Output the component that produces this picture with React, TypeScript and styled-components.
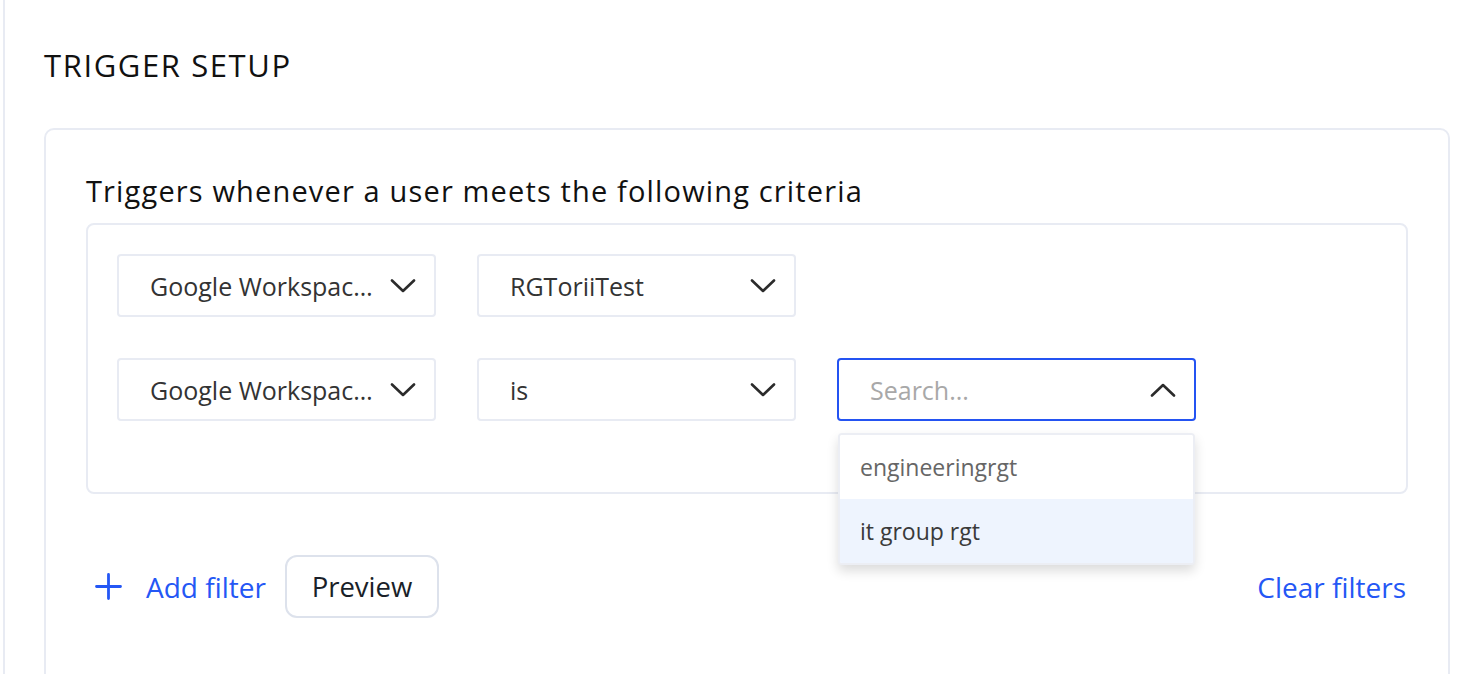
import React from "react";
import styled, { createGlobalStyle } from "styled-components";

const Global = createGlobalStyle`
  html, body { margin: 0; padding: 0; background: #ffffff; }
  body { font-family: "Open Sans", "Noto Sans", sans-serif; color: #1c1c1c; overflow: hidden; }
  * { box-sizing: border-box; }
`;

const Page = styled.div`
  margin-left: 3px;
  border-left: 2px solid #e8ebf3;
  padding: 44px 0 0 39px;
  height: 674px;
`;

const Heading = styled.h1`
  margin: 0;
  font-size: 31px;
  font-weight: 400;
  line-height: 42px;
  letter-spacing: 1.6px;
  color: #111;
`;

const Card = styled.section`
  margin-top: 42px;
  width: 1406px;
  height: 560px;
  border: 2px solid #e8ebf3;
  border-radius: 10px;
  padding: 40px 40px 0 40px;
`;

const Subtitle = styled.h2`
  margin: 0;
  font-size: 29px;
  font-weight: 400;
  line-height: 42px;
  letter-spacing: 1.15px;
  color: #111;
`;

const FilterBox = styled.div`
  margin-top: 11px;
  border: 2px solid #e8ebf3;
  border-radius: 8px;
  padding: 29px 29px 71px 29px;
  display: flex;
  flex-direction: column;
  gap: 41px;
`;

const Row = styled.div`
  display: flex;
  gap: 41px;
  align-items: flex-start;
`;

const Select = styled.div<{ $width?: number; $active?: boolean }>`
  position: relative;
  width: ${(p) => p.$width ?? 319}px;
  height: 63px;
  border: 2px solid ${(p) => (p.$active ? "#2453f2" : "#e8ebf3")};
  border-radius: 4px;
  display: flex;
  align-items: center;
  padding: 0 18px 0 31px;
  gap: 14px;
`;

const SelectText = styled.span<{ $placeholder?: boolean }>`
  flex: 1;
  min-width: 0;
  font-size: 25px;
  line-height: 34px;
  color: ${(p) => (p.$placeholder ? "#a8a8a8" : "#333")};
  white-space: nowrap;
  overflow: hidden;
  text-overflow: ellipsis;
`;

const Menu = styled.div`
  position: absolute;
  left: -1px;
  right: -1px;
  top: 73px;
  background: #fff;
  border: 2px solid #eceef4;
  border-radius: 4px;
  box-shadow: 0 6px 12px rgba(0, 0, 0, 0.14);
  overflow: hidden;
  z-index: 2;
`;

const MenuItem = styled.div<{ $hover?: boolean }>`
  height: 64px;
  display: flex;
  align-items: center;
  padding-left: 20px;
  font-size: 23px;
  color: ${(p) => (p.$hover ? "#3a3a3a" : "#666")};
  background: ${(p) => (p.$hover ? "#eef4fe" : "#fff")};
`;

const Actions = styled.div`
  margin-top: 61px;
  display: flex;
  align-items: center;
  padding-left: 9px;
`;

const LinkButton = styled.button`
  border: none;
  background: none;
  padding: 0;
  display: flex;
  align-items: center;
  gap: 24px;
  font-family: inherit;
  font-size: 28px;
  color: #2457f5;
  cursor: pointer;
`;

const OutlineButton = styled.button`
  margin-left: 19px;
  width: 154px;
  height: 63px;
  border: 2px solid #dde2ec;
  border-radius: 12px;
  background: #fff;
  font-family: inherit;
  font-size: 27.5px;
  color: #1a1f29;
`;

const Spacer = styled.div`
  flex: 1;
`;

const ClearLink = styled(LinkButton)`
  margin-right: 2px;
`;

const Chevron = ({ up }: { up?: boolean }) => (
  <svg width="26" height="14" viewBox="0 0 26 14" fill="none">
    <path
      d={up ? "M2 12.5 L13 2 L24 12.5" : "M2 1.5 L13 12 L24 1.5"}
      stroke="#2b2b2b"
      strokeWidth="2.6"
      strokeLinecap="round"
      strokeLinejoin="round"
    />
  </svg>
);

const Plus = () => (
  <svg width="27" height="27" viewBox="0 0 27 27" fill="none">
    <path d="M13.5 1.5 V25.5 M1.5 13.5 H25.5" stroke="#2457f5" strokeWidth="2.8" strokeLinecap="round" />
  </svg>
);

export default function App() {
  return (
    <>
      <Global />
      <Page>
        <Heading>TRIGGER SETUP</Heading>
        <Card>
          <Subtitle>Triggers whenever a user meets the following criteria</Subtitle>
          <FilterBox>
            <Row>
              <Select>
                <SelectText>Google Workspace Groups</SelectText>
                <Chevron />
              </Select>
              <Select>
                <SelectText>RGToriiTest</SelectText>
                <Chevron />
              </Select>
            </Row>
            <Row>
              <Select>
                <SelectText>Google Workspace Group</SelectText>
                <Chevron />
              </Select>
              <Select>
                <SelectText>is</SelectText>
                <Chevron />
              </Select>
              <Select $width={359} $active>
                <SelectText $placeholder>Search...</SelectText>
                <Chevron up />
                <Menu>
                  <MenuItem>engineeringrgt</MenuItem>
                  <MenuItem $hover>it group rgt</MenuItem>
                </Menu>
              </Select>
            </Row>
          </FilterBox>
          <Actions>
            <LinkButton>
              <Plus />
              Add filter
            </LinkButton>
            <OutlineButton>Preview</OutlineButton>
            <Spacer />
            <ClearLink>Clear filters</ClearLink>
          </Actions>
        </Card>
      </Page>
    </>
  );
}
